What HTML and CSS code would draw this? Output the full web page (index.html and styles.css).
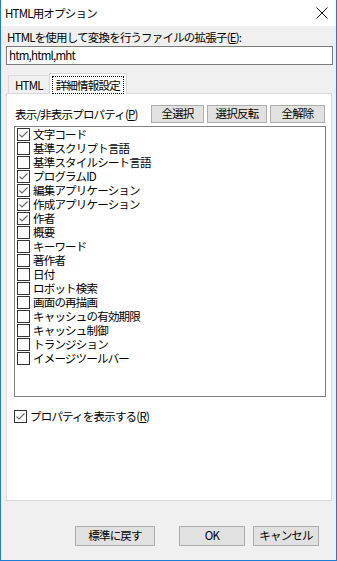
FILE: index.html
```html
<!DOCTYPE html>
<html lang="ja">

<head>
  <meta charset="UTF-8">
  <meta name="viewport" content="width=device-width, initial-scale=1.0">
  <title>HTML用オプション</title>
  <link rel="stylesheet" href="styles.css">
</head>

<body>
  <div class="window">
    <div class="titlebar">
      <span class="title">HTML用オプション</span>
      <svg class="close" width="12" height="12" viewBox="0 0 12 12">
        <path d="M0.5 0.5 L11.5 11.5 M11.5 0.5 L0.5 11.5" stroke="#111" stroke-width="1" fill="none" />
      </svg>
    </div>

    <div class="client">
      <div class="ext-label">HTMLを使用して変換を行うファイルの拡張子(<u>E</u>):</div>
      <div class="textbox">htm,html,mht</div>

      <div class="tabs">
        <div class="tab">HTML</div>
        <div class="tab active"><span class="focus">詳細情報設定</span></div>
      </div>

      <div class="panel">
        <div class="props-head">
          <span class="props-label">表示/非表示プロパティ(<u>P</u>)</span>
          <div class="btn btn-a">全選択</div>
          <div class="btn btn-b">選択反転</div>
          <div class="btn btn-c">全解除</div>
        </div>

        <div class="listbox">
          <div class="row"><span class="box on"></span>文字コード</div>
          <div class="row"><span class="box"></span>基準スクリプト言語</div>
          <div class="row"><span class="box"></span>基準スタイルシート言語</div>
          <div class="row"><span class="box on"></span>プログラムID</div>
          <div class="row"><span class="box on"></span>編集アプリケーション</div>
          <div class="row"><span class="box on"></span>作成アプリケーション</div>
          <div class="row"><span class="box on"></span>作者</div>
          <div class="row"><span class="box"></span>概要</div>
          <div class="row"><span class="box"></span>キーワード</div>
          <div class="row"><span class="box"></span>著作者</div>
          <div class="row"><span class="box"></span>日付</div>
          <div class="row"><span class="box"></span>ロボット検索</div>
          <div class="row"><span class="box"></span>画面の再描画</div>
          <div class="row"><span class="box"></span>キャッシュの有効期限</div>
          <div class="row"><span class="box"></span>キャッシュ制御</div>
          <div class="row"><span class="box"></span>トランジション</div>
          <div class="row"><span class="box"></span>イメージツールバー</div>
        </div>

        <div class="show-props"><span class="box on"></span>プロパティを表示する(<u>R</u>)</div>
      </div>

      <div class="footer">
        <div class="btn btn-reset">標準に戻す</div>
        <div class="btn btn-ok">OK</div>
        <div class="btn btn-cancel">キャンセル</div>
      </div>
    </div>
  </div>
</body>

</html>
```

FILE: styles.css
```css
* {
  box-sizing: border-box;
}

html,
body {
  margin: 0;
  padding: 0;
  background: #fff;
}

body {
  font-family: "Noto Sans CJK JP", "Noto Sans", sans-serif;
  font-size: 11.5px;
  letter-spacing: -0.8px;
  color: #000;
  white-space: nowrap;
}

u {
  text-decoration: underline;
  text-underline-offset: 1px;
}

.window {
  width: 337px;
  height: 561px;
  border: 1px solid #1a7fd4;
  border-top: none;
  background: #f0f0f0;
  display: flex;
  flex-direction: column;
}

/* タイトルバー */
.titlebar {
  height: 26px;
  background: #fff;
  display: flex;
  align-items: center;
  padding: 0 8px 0 4px;
}
.title {
  flex: 1;
  line-height: 16px;
  padding-bottom: 1px;
}

.client {
  flex: 1;
  padding: 3px 4px 0 5px;
  display: flex;
  flex-direction: column;
}

.ext-label {
  line-height: 16px;
  height: 17px;
  padding-left: 1px;
}

.textbox {
  height: 19px;
  width: 327px;
  border: 1px solid #7a7a7a;
  background: #fff;
  line-height: 16px;
  padding-left: 2px;
}

/* タブ */
.tabs {
  display: flex;
  align-items: flex-end;
  height: 20px;
  margin-top: 8px;
  padding-left: 2px;
  position: relative;
  z-index: 1;
}
.tab {
  height: 18px;
  line-height: 17px;
  padding: 1px 6px 0;
  border: 1px solid #d9d9d9;
  border-bottom: none;
  background: #f0f0f0;
}
.tab.active {
  height: 21px;
  margin-bottom: -1px;
  margin-left: -1px;
  background: #fff;
  padding: 2px 2px 0;
}
.focus {
  display: block;
  border: 1px dotted #000;
  line-height: 16px;
  padding: 0 3px;
}

.panel {
  width: 326px;
  height: 408px;
  background: #fff;
  border: 1px solid #d9d9d9;
  padding: 11px 6px 0 7px;
}

.props-head {
  display: flex;
  align-items: center;
  height: 18px;
}
.props-label {
  flex: 1;
  padding-left: 1px;
  line-height: 16px;
}

.btn {
  height: 18px;
  background: #e1e1e1;
  border: 1px solid #adadad;
  line-height: 15px;
  text-align: center;
}
.btn-a {
  width: 53px;
}
.btn-b {
  width: 60px;
  margin-left: 3px;
}
.btn-c {
  width: 55px;
  margin-left: 3px;
}

/* プロパティ一覧 */
.listbox {
  margin-top: 3px;
  width: 312px;
  height: 271px;
  border: 1px solid #828282;
  padding: 0 0 0 2px;
}
.row {
  display: flex;
  align-items: center;
  height: 14px;
  line-height: 14px;
}

.box {
  width: 13px;
  height: 13px;
  border: 1px solid #333;
  background: #fff;
  margin-right: 3px;
  flex: none;
}
.box.on {
  background: #fff url("data:image/svg+xml,%3Csvg xmlns='http://www.w3.org/2000/svg' width='11' height='11'%3E%3Cpath d='M1.5 5.5 L4 8 L9.5 2.5' stroke='%23666' stroke-width='1.1' fill='none'/%3E%3C/svg%3E") no-repeat center;
}

.show-props {
  display: flex;
  align-items: center;
  margin-top: 12px;
  height: 14px;
  line-height: 14px;
}

.footer {
  display: flex;
  padding: 25px 0 0 69px;
}
.footer .btn {
  height: 20px;
  line-height: 17px;
}
.btn-reset {
  width: 80px;
}
.btn-ok {
  width: 66px;
  margin-left: 24px;
}
.btn-cancel {
  width: 66px;
  margin-left: 8px;
}
```
